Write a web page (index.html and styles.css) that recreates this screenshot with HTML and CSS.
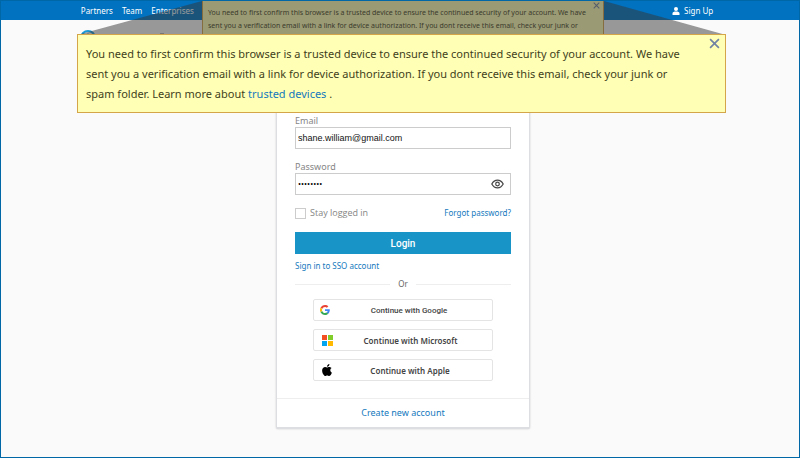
FILE: index.html
```html
<!DOCTYPE html>
<html lang="en">
<head>
    <meta charset="UTF-8">
    <meta name="viewport" content="width=device-width, initial-scale=1.0">
    <title>Login</title>
    <link rel="stylesheet" href="styles.css">
</head>
<body>
    <header class="topbar">
        <nav class="topbar-inner">
            <a href="#">Partners</a>
            <a href="#">Team</a>
            <a href="#">Enterprises</a>
            <a href="#" class="signup">
                <svg width="8" height="8" viewBox="0 0 8 8" fill="#fff"><circle cx="4" cy="2" r="2"/><path d="M0.5 8V6.6C0.5 5.2 2 4.6 4 4.6S7.5 5.2 7.5 6.6V8Z"/></svg>
                Sign Up
            </a>
        </nav>
    </header>

    <div class="brand">
        <svg width="84" height="18" viewBox="0 0 84 18" fill="none">
            <circle cx="7" cy="9" r="7" stroke="#1a9bd7" stroke-width="2"/>
            <circle cx="7" cy="9" r="4" stroke="#1a9bd7" stroke-width="1"/>
            <path d="M79 5h4" stroke="#777" stroke-width="1"/>
        </svg>
    </div>

    <main class="content">
        <div class="card">
            <form class="login-form">
                <label class="field-label" for="email">Email</label>
                <input class="field" type="email" id="email" value="shane.william@gmail.com">

                <label class="field-label" for="password">Password</label>
                <div class="field password-field">
                    <input type="password" id="password" value="password">
                    <button type="button" class="eye" aria-label="Show password">
                        <svg width="13" height="10" viewBox="0 0 13 10" fill="none" stroke="#444" stroke-width="1.2"><path d="M0.8 5C2.2 2.4 4.1 1.1 6.5 1.1S10.8 2.4 12.2 5C10.8 7.6 8.9 8.9 6.5 8.9S2.2 7.6 0.8 5Z"/><circle cx="6.5" cy="5" r="1.8"/></svg>
                    </button>
                </div>

                <div class="options">
                    <input type="checkbox" id="stay">
                    <label for="stay">Stay logged in</label>
                    <a href="#" class="forgot">Forgot password?</a>
                </div>

                <button type="submit" class="btn-login">Login</button>
                <a href="#" class="sso">Sign in to SSO account</a>
                <div class="divider">Or</div>

                <div class="providers">
                    <button type="button" class="provider google">
                        <svg width="10" height="10" viewBox="0 0 48 48"><path fill="#EA4335" d="M24 9.5c3.54 0 6.71 1.22 9.21 3.6l6.85-6.85C35.9 2.38 30.47 0 24 0 14.62 0 6.51 5.38 2.56 13.22l7.98 6.19C12.43 13.72 17.74 9.5 24 9.5z"/><path fill="#4285F4" d="M46.98 24.55c0-1.57-.15-3.09-.38-4.55H24v9.02h12.94c-.58 2.96-2.26 5.48-4.78 7.18l7.73 6c4.51-4.18 7.09-10.36 7.09-17.65z"/><path fill="#FBBC05" d="M10.53 28.59A14.5 14.5 0 0 1 10.53 19.41l-7.97-6.19a24 24 0 0 0 0 21.56z"/><path fill="#34A853" d="M24 48c6.48 0 11.93-2.13 15.89-5.81l-7.73-6c-2.15 1.45-4.92 2.3-8.16 2.3-6.26 0-11.57-4.22-13.47-9.91l-7.98 6.19C6.51 42.62 14.62 48 24 48z"/></svg>
                        <span>Continue with Google</span>
                    </button>
                    <button type="button" class="provider">
                        <svg width="11" height="11" viewBox="0 0 11 11"><path fill="#f25022" d="M0 0h5v5H0z"/><path fill="#80cc28" d="M6 0h5v5H6z"/><path fill="#00a4ef" d="M0 6h5v5H0z"/><path fill="#ffb900" d="M6 6h5v5H6z"/></svg>
                        <span>Continue with Microsoft</span>
                    </button>
                    <button type="button" class="provider">
                        <svg width="10" height="12" viewBox="0 0 814 1000"><path d="M788 341c-6 4-108 62-108 190 0 148 130 201 134 202-1 3-21 72-69 142-42 61-87 123-155 123s-85-40-163-40c-76 0-103 41-165 41s-105-57-155-127C49 790 0 663 0 542c0-194 126-297 250-297 66 0 121 43 163 43 39 0 101-46 176-46 29 0 131 3 199 99zM554 160c31-37 53-88 53-139 0-7-1-14-2-20-50 2-110 34-147 76-28 32-55 83-55 135 0 8 1 16 2 18 3 1 8 1 13 1 46 0 103-30 136-71z"/></svg>
                        <span>Continue with Apple</span>
                    </button>
                </div>
            </form>
            <footer class="card-footer">
                <a href="#">Create new account</a>
            </footer>
        </div>
    </main>

    <div class="notice notice-small">
        You need to first confirm this browser is a trusted device to ensure the continued security of your account. We have<br>
        sent you a verification email with a link for device authorization. If you dont receive this email, check your junk or
        <button type="button" class="close" aria-label="Close"><svg width="7" height="7" viewBox="0 0 10 10"><path d="M1 1l8 8M9 1l-8 8"/></svg></button>
    </div>

    <div class="shade"></div>

    <div class="notice notice-large">
        You need to first confirm this browser is a trusted device to ensure the continued security of your account. We have<br>
        sent you a verification email with a link for device authorization. If you dont receive this email, check your junk or<br>
        spam folder. Learn more about <a href="#">trusted devices</a> .
        <button type="button" class="close" aria-label="Close"><svg width="11" height="11" viewBox="0 0 10 10"><path d="M1 1l8 8M9 1l-8 8"/></svg></button>
    </div>
</body>
</html>
```
FILE: styles.css
```css
:root {
    --blue: #0072c0;
    --frame: #0067a6;
    --link: #1479bd;
    --button: #1894c7;
    --notice: #ffffb5;
    --notice-border: #d5a54a;
    --muted: #858585;
    --line: #ccc;
}

* {
    box-sizing: border-box;
}

body {
    position: relative;
    margin: 0;
    min-height: 100vh;
    border: 1px solid var(--frame);
    background-color: #fafafa;
    font-family: "Noto Sans", "Open Sans", sans-serif;
    font-size: 8px;
    line-height: 12px;
}

a {
    color: var(--link);
    text-decoration: none;
}

button {
    font-family: inherit;
    cursor: pointer;
}

svg {
    display: block;
}

.topbar {
    background-color: var(--blue);
}

.topbar-inner {
    display: flex;
    align-items: center;
    gap: 9px;
    height: 19px;
    width: 80%;
    margin: 0 auto;
}

.topbar-inner a {
    color: #fff;
}

.topbar-inner .signup {
    display: flex;
    align-items: center;
    gap: 4px;
    margin-left: auto;
    margin-right: 6px;
}

.brand {
    width: 80%;
    height: 36px;
    margin: 0 auto;
    padding-top: 9px;
}

.brand svg {
    overflow: visible;
}

/* login card */
.content {
    padding-left: 6px;
}

.card {
    width: 254px;
    margin: 0 auto;
    background-color: #fff;
    border: 1px solid #dcdee2;
    border-bottom-width: 2px;
    border-radius: 2px;
    box-shadow: 0 0 2px rgba(0, 0, 0, 0.2);
}

.login-form {
    padding: 58px 18px 17px;
}

.field-label {
    display: block;
    color: var(--muted);
    font-size: 9px;
}

.field {
    display: block;
    width: 100%;
    height: 22px;
    margin-bottom: 12px;
    padding: 0 2px;
    border: 1px solid var(--line);
    background-color: #fff;
    color: #111;
    font-family: "Liberation Sans", Arial, sans-serif;
    font-size: 9px;
    outline: none;
}

.password-field {
    display: flex;
    align-items: center;
}

.password-field input {
    flex: 1;
    min-width: 0;
    padding: 0;
    border: 0;
    font-family: Roboto, sans-serif;
    font-size: 9px;
    outline: none;
}

.eye {
    padding: 0 4px;
    border: 0;
    background: none;
}

.options {
    display: flex;
    align-items: center;
    gap: 4px;
    color: var(--muted);
    font-size: 9px;
}

.options label {
    font-family: "Open Sans", "Noto Sans", sans-serif;
}

.options input {
    appearance: none;
    width: 11px;
    height: 11px;
    margin: 0;
    border: 1px solid var(--line);
}

.forgot {
    margin-left: auto;
    font-size: 8px;
}

.btn-login {
    display: block;
    width: 100%;
    height: 22px;
    margin: 13px 0 6px;
    padding: 0;
    border: 0;
    background-color: var(--button);
    color: #fff;
    font-family: Roboto, sans-serif;
    font-size: 10px;
    font-weight: 500;
}

.sso {
    display: block;
}

.divider {
    display: flex;
    align-items: center;
    gap: 8px;
    margin: 6px 0 9px;
    color: #666;
}

.divider::before,
.divider::after {
    content: "";
    flex: 1;
    border-top: 1px solid #eee;
}

.providers {
    display: flex;
    flex-direction: column;
    gap: 8px;
    padding: 0 18px;
}

.provider {
    display: flex;
    align-items: center;
    height: 22px;
    padding: 0 4px 0 8px;
    border: 1px solid #e4e4e4;
    border-radius: 2px;
    background-color: #fff;
    color: #444;
    font-size: 8px;
    font-weight: 600;
}

.provider.google {
    padding-left: 6px;
    font-family: Roboto, sans-serif;
    font-weight: 500;
}

.provider span {
    flex: 1;
    text-align: center;
}

.card-footer {
    padding: 8px;
    border-top: 1px solid #eee;
    text-align: center;
    font-size: 9px;
}

/* device notices and the shade between them */
.notice {
    position: absolute;
    background-color: var(--notice);
    border: 1px solid var(--notice-border);
    color: #3f3f1c;
    white-space: nowrap;
}

.notice-small {
    top: 0;
    left: 201px;
    width: 402px;
    height: 34px;
    padding: 5px;
    border-top: 0;
    font-size: 7px;
    line-height: 13px;
}

.notice-large {
    top: 33px;
    left: 76px;
    width: 649px;
    padding: 9px 8px 8px;
    font-size: 11px;
    line-height: 20px;
}

.close {
    position: absolute;
    top: 3px;
    right: 5px;
    padding: 0;
    border: 0;
    background: none;
}

.notice-small .close {
    top: 1px;
    right: 3px;
}

.close path {
    stroke: #7184a3;
    stroke-width: 1.5;
}

.shade {
    position: absolute;
    top: 0;
    left: 76px;
    width: 649px;
    height: 34px;
    background-color: rgba(54, 54, 54, 0.5);
    clip-path: polygon(125px 0, 527px 0, 100% 100%, 0 100%);
}
```
